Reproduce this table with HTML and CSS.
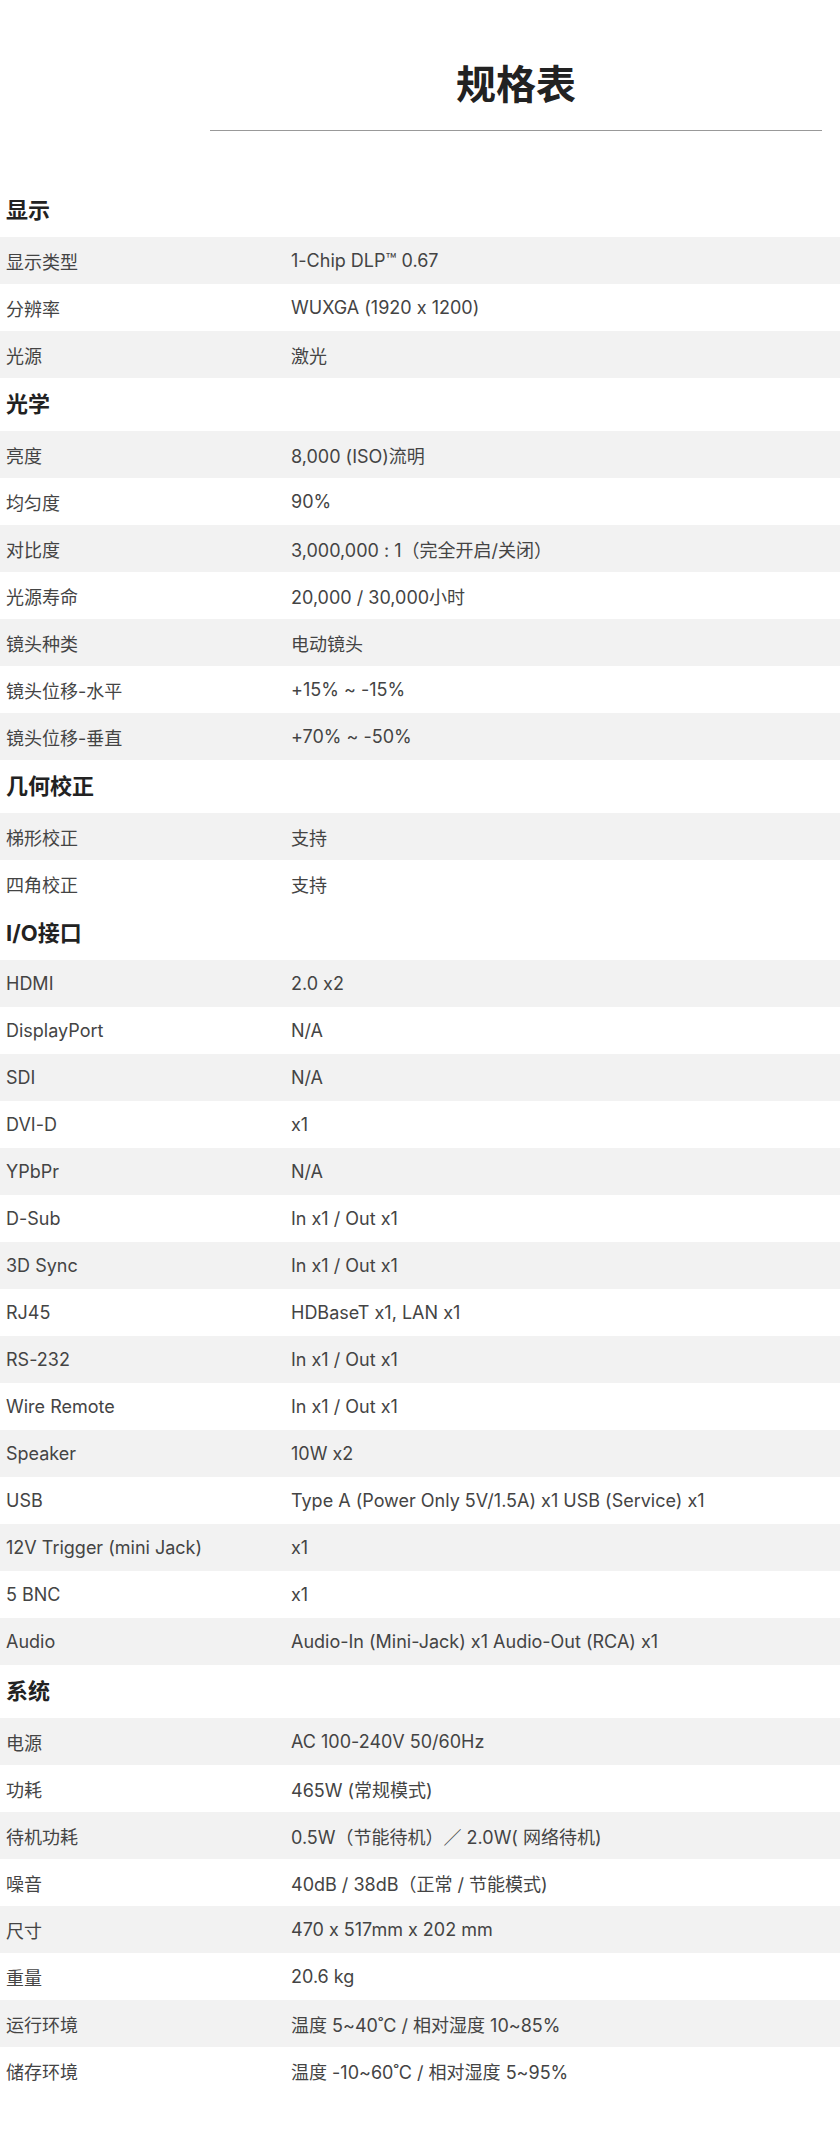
FILE: index.html
```html
<!DOCTYPE html>
<html>

<head>
    <title>规格表</title>
    <link rel="stylesheet" href="styles.css">
</head>

<body>
    <div class="page-header">
        <h1>规格表</h1>
    </div>

    <div class="specs">
        <div class="spec-group">
            <h3>显示</h3>
            <div class="spec-row"><span>显示类型</span><span>1-Chip DLP™ 0.67</span></div>
            <div class="spec-row"><span>分辨率</span><span>WUXGA (1920 x 1200)</span></div>
            <div class="spec-row"><span>光源</span><span>激光</span></div>
        </div>

        <div class="spec-group">
            <h3>光学</h3>
            <div class="spec-row"><span>亮度</span><span>8,000 (ISO)流明</span></div>
            <div class="spec-row"><span>均匀度</span><span>90%</span></div>
            <div class="spec-row"><span>对比度</span><span>3,000,000 : 1（完全开启/关闭）</span></div>
            <div class="spec-row"><span>光源寿命</span><span>20,000 / 30,000小时</span></div>
            <div class="spec-row"><span>镜头种类</span><span>电动镜头</span></div>
            <div class="spec-row"><span>镜头位移-水平</span><span>+15% ~ -15%</span></div>
            <div class="spec-row"><span>镜头位移-垂直</span><span>+70% ~ -50%</span></div>
        </div>

        <div class="spec-group">
            <h3>几何校正</h3>
            <div class="spec-row"><span>梯形校正</span><span>支持</span></div>
            <div class="spec-row"><span>四角校正</span><span>支持</span></div>
        </div>

        <div class="spec-group">
            <h3>I/O接口</h3>
            <div class="spec-row"><span>HDMI</span><span>2.0 x2</span></div>
            <div class="spec-row"><span>DisplayPort</span><span>N/A</span></div>
            <div class="spec-row"><span>SDI</span><span>N/A</span></div>
            <div class="spec-row"><span>DVI-D</span><span>x1</span></div>
            <div class="spec-row"><span>YPbPr</span><span>N/A</span></div>
            <div class="spec-row"><span>D-Sub</span><span>In x1 / Out x1</span></div>
            <div class="spec-row"><span>3D Sync</span><span>In x1 / Out x1</span></div>
            <div class="spec-row"><span>RJ45</span><span>HDBaseT x1, LAN x1</span></div>
            <div class="spec-row"><span>RS-232</span><span>In x1 / Out x1</span></div>
            <div class="spec-row"><span>Wire Remote</span><span>In x1 / Out x1</span></div>
            <div class="spec-row"><span>Speaker</span><span>10W x2</span></div>
            <div class="spec-row"><span>USB</span><span>Type A (Power Only 5V/1.5A) x1 USB (Service) x1</span></div>
            <div class="spec-row"><span>12V Trigger (mini Jack)</span><span>x1</span></div>
            <div class="spec-row"><span>5 BNC</span><span>x1</span></div>
            <div class="spec-row"><span>Audio</span><span>Audio-In (Mini-Jack) x1 Audio-Out (RCA) x1</span></div>
        </div>

        <div class="spec-group">
            <h3>系统</h3>
            <div class="spec-row"><span>电源</span><span>AC 100-240V 50/60Hz</span></div>
            <div class="spec-row"><span>功耗</span><span>465W (常规模式)</span></div>
            <div class="spec-row"><span>待机功耗</span><span>0.5W（节能待机）／ 2.0W( 网络待机)</span></div>
            <div class="spec-row"><span>噪音</span><span>40dB / 38dB（正常 / 节能模式)</span></div>
            <div class="spec-row"><span>尺寸</span><span>470 x 517mm x 202 mm</span></div>
            <div class="spec-row"><span>重量</span><span>20.6 kg</span></div>
            <div class="spec-row"><span>运行环境</span><span>温度 5~40˚C / 相对湿度 10~85%</span></div>
            <div class="spec-row"><span>储存环境</span><span>温度 -10~60˚C / 相对湿度 5~95%</span></div>
        </div>
    </div>
</body>

</html>
```

FILE: styles.css
```css
body {
    margin: 0;
    background-color: #fff;
    color: #444;
    font-family: Inter, "Noto Sans CJK SC", sans-serif;
    font-feature-settings: "calt" 0;
}

.page-header {
    margin: 0 18px 0 210px;
    padding: 57px 0 17px;
    border-bottom: 1px solid #999;
}

.page-header h1 {
    margin: 0;
    font-size: 40px;
    line-height: 56px;
    font-weight: bold;
    text-align: center;
    color: #222;
}

.specs {
    margin-top: 53px;
    padding-bottom: 48px;
}

.spec-group h3 {
    margin: 0;
    padding: 0 6px;
    height: 53px;
    line-height: 53px;
    font-size: 22px;
    font-weight: bold;
    color: #222;
}

.spec-row {
    display: grid;
    grid-template-columns: 285px 1fr;
    align-items: center;
    height: 47px;
    padding: 0 6px;
    font-size: 18px;
}

.spec-row:nth-child(even) {
    background-color: #f2f2f2;
}
```
